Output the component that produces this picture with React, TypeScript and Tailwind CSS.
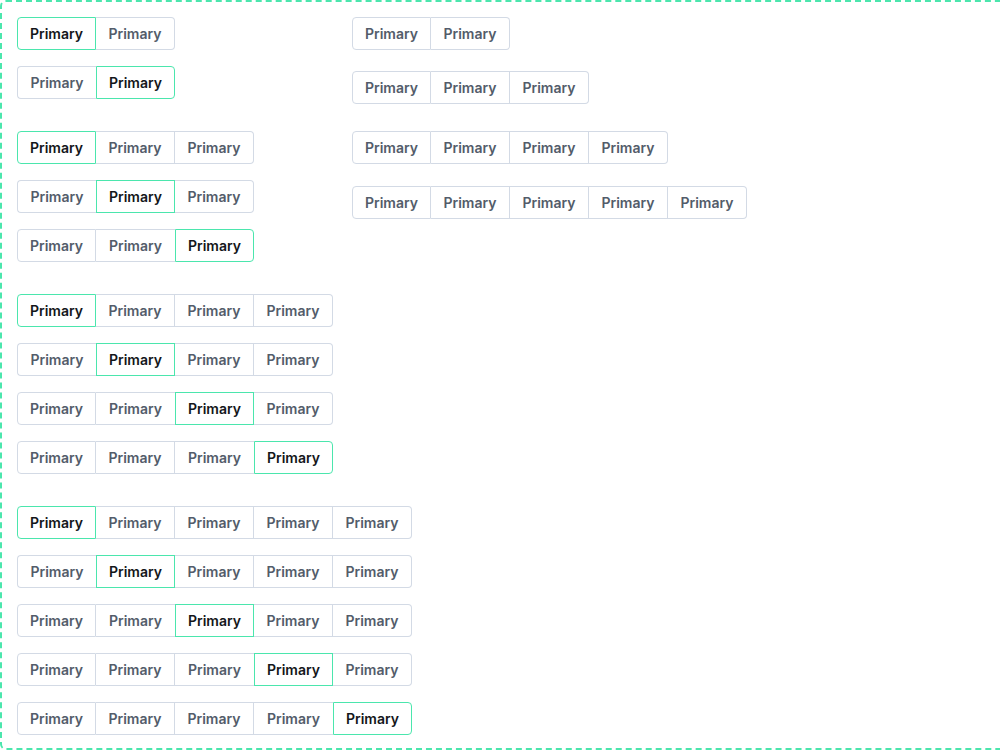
import React from "react";

interface GroupProps {
  count: number;
  active?: number;
}

const SegmentGroup = ({ count, active }: GroupProps) => {
  return (
    <div className="flex w-fit shrink-0">
      {Array.from({ length: count }).map((_, i) => {
        const isActive = i === active;
        const first = i === 0;
        const last = i === count - 1;
        const nextActive = i + 1 === active;
        return (
          <button
            key={i}
            className={`flex h-[33px] w-[79px] shrink-0 items-center justify-center border-y bg-white text-sm font-semibold ${
              first || isActive ? "border-l" : ""
            } ${nextActive ? "" : "border-r"} ${first ? "rounded-l" : ""} ${last ? "rounded-r" : ""} ${
              isActive ? "border-[#4be6ad] text-[#14161a]" : "border-[#d3dae5] text-[#535c6a]"
            }`}
          >
            Primary
          </button>
        );
      })}
    </div>
  );
};

const App = () => {
  const leftGroups = [2, 3, 4, 5];
  return (
    <div
      className="h-[750px] w-[1000px] overflow-hidden bg-white"
      style={{ fontFamily: "Inter, 'Noto Sans', sans-serif" }}
    >
      <div className="flex h-[750px] w-[1012px] rounded-md border-2 border-dashed border-[#4be6ad] p-[15px]">
        <div className="flex w-[335px] shrink-0 flex-col gap-8">
          {leftGroups.map((n) => (
            <div key={n} className="flex flex-col gap-4">
              {Array.from({ length: n }).map((_, a) => (
                <SegmentGroup key={a} count={n} active={a} />
              ))}
            </div>
          ))}
        </div>
        <div className="flex flex-col">
          <SegmentGroup count={2} />
          <div className="mt-[21px]">
            <SegmentGroup count={3} />
          </div>
          <div className="mt-[27px]">
            <SegmentGroup count={4} />
          </div>
          <div className="mt-[22px]">
            <SegmentGroup count={5} />
          </div>
        </div>
      </div>
    </div>
  );
};

export default App;
